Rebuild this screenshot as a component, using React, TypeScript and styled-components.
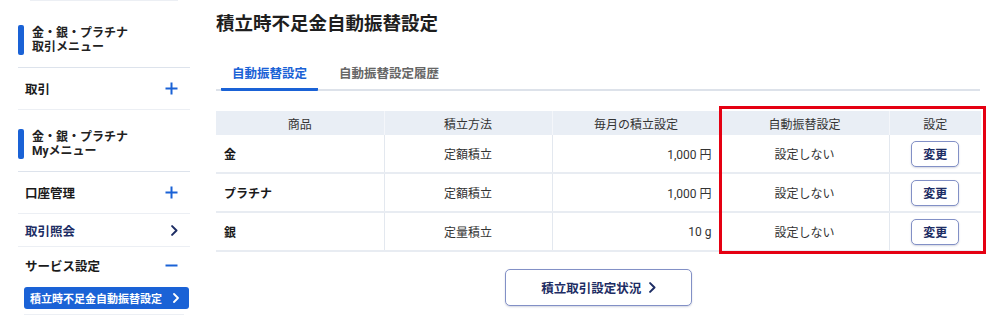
import * as React from 'react'
import styled, { createGlobalStyle } from 'styled-components'

const GlobalStyle = createGlobalStyle`
  body {
    margin: 0;
    background: #ffffff;
    font-family: 'Roboto', 'Noto Sans CJK JP', sans-serif;
    color: #222222;
  }
`

const Page = styled.div`
  display: flex;
  gap: 26px;
  padding-left: 18px;
  height: 316px;
  overflow: hidden;
`

const Sidebar = styled.nav`
  width: 172px;
  flex-shrink: 0;
  display: flex;
  flex-direction: column;
`

const Rule = styled.div<{ $inset?: number; $dark?: boolean }>`
  height: 1px;
  margin: 0 ${(p) => p.$inset ?? 0}px;
  background: ${(p) => (p.$dark ? '#dde3ec' : '#eceff4')};
`

const MenuHead = styled.div<{ $h: number; $top: number }>`
  height: ${(p) => p.$h}px;
  box-sizing: border-box;
  padding-top: ${(p) => p.$top}px;
`

const HeadTitle = styled.div`
  position: relative;
  padding-left: 14px;
  font-size: 12px;
  line-height: 14px;
  font-weight: 700;
  color: #222;

  &::before {
    content: '';
    position: absolute;
    left: 0;
    top: -1px;
    bottom: -1px;
    width: 6px;
    border-radius: 2px;
    background: #1a62d6;
  }
`

const Item = styled.div<{ $h: number; $link?: boolean }>`
  height: ${(p) => p.$h}px;
  display: flex;
  align-items: center;
  justify-content: space-between;
  padding: 0 12px 0 7px;
  font-size: 12.5px;
  font-weight: 700;
  color: ${(p) => (p.$link ? '#1d2d64' : '#1a1a1a')};
`

const SubLink = styled.div`
  margin: 4px 1px 0 6px;
  height: 22px;
  border-radius: 3px;
  background: #1a62d6;
  color: #fff;
  display: flex;
  align-items: center;
  justify-content: space-between;
  padding: 0 10px 0 6px;
  font-size: 11px;
  font-weight: 700;
`

const Main = styled.main`
  width: 765px;
  display: flex;
  flex-direction: column;
`

const Title = styled.h1`
  margin: 13px 0 0;
  font-size: 18.5px;
  line-height: 22px;
  font-weight: 700;
  color: #1e1e1e;
`

const Tabs = styled.div`
  display: flex;
  margin-top: 30px;
  border-bottom: 2px solid #dde2ea;
  margin-right: 1px;
`

const Tab = styled.div<{ $active?: boolean }>`
  margin: 0 5px -2px 5px;
  padding: 0 11px 6px;
  font-size: 12.5px;
  line-height: 17px;
  font-weight: 700;
  color: ${(p) => (p.$active ? '#1a62d6' : '#666')};
  border-bottom: 3px solid ${(p) => (p.$active ? '#1a62d6' : 'transparent')};
  border-radius: 1px;
`

const TableWrap = styled.div`
  position: relative;
  margin-top: 20px;
`

const Table = styled.table`
  width: 765px;
  border-collapse: collapse;
  table-layout: fixed;
  font-size: 12px;
  color: #333;
`

const Th = styled.th`
  height: 24px;
  padding: 0;
  background: #e9eef5;
  font-weight: 400;
  text-align: center;
  border-left: 1px solid #f4f6fa;
  &:first-child {
    border-left: none;
  }
`

const Td = styled.td<{ $align?: 'left' | 'center' | 'right'; $bold?: boolean }>`
  height: 37px;
  padding: 0 8px;
  text-align: ${(p) => p.$align ?? 'center'};
  font-weight: ${(p) => (p.$bold ? 700 : 400)};
  color: ${(p) => (p.$bold ? '#1a1a1a' : '#333')};
  border-bottom: 2px solid #e8ecf2;
  border-left: 1px solid #e3e8ef;
  &:first-child {
    border-left: none;
  }
`

const Highlight = styled.div`
  position: absolute;
  left: 503px;
  top: -5px;
  width: 261px;
  height: 142px;
  border: 3px solid #e50012;
  pointer-events: none;
`

const SmallButton = styled.button`
  width: 48px;
  height: 26px;
  border: 1.5px solid #8290c6;
  border-radius: 5px;
  background: #fff;
  color: #1d2d64;
  font-family: inherit;
  font-size: 12px;
  font-weight: 700;
  box-shadow: 0 1px 2px rgba(30, 45, 100, 0.2);
  vertical-align: middle;
`

const Footer = styled.div`
  display: flex;
  justify-content: center;
  margin-top: 17px;
`

const WideButton = styled.button`
  width: 187px;
  height: 37px;
  border: 1.5px solid #8290c6;
  border-radius: 5px;
  background: #fff;
  color: #1d2d64;
  font-family: inherit;
  font-size: 12.5px;
  font-weight: 700;
  display: flex;
  align-items: center;
  justify-content: center;
  gap: 8px;
  box-shadow: 0 1px 2px rgba(30, 45, 100, 0.2);
`

const Plus = () => (
  <svg width="13" height="13" viewBox="0 0 13 13">
    <path d="M6.5 0.5v12M0.5 6.5h12" stroke="#1a62d6" strokeWidth="2" />
  </svg>
)

const Minus = () => (
  <svg width="13" height="13" viewBox="0 0 13 13">
    <path d="M0.5 6.5h12" stroke="#1a62d6" strokeWidth="2" />
  </svg>
)

const Chevron = ({ color = '#1d2d64', size = 10 }: { color?: string; size?: number }) => (
  <svg width={size * 0.6} height={size} viewBox="0 0 6 10">
    <path d="M1 1l4 4-4 4" fill="none" stroke={color} strokeWidth="1.8" strokeLinecap="round" strokeLinejoin="round" />
  </svg>
)

const rows = [
  { name: '金', method: '定額積立', amount: '1,000 円' },
  { name: 'プラチナ', method: '定額積立', amount: '1,000 円' },
  { name: '銀', method: '定量積立', amount: '10 g' },
]

export default function App() {
  return (
    <>
      <GlobalStyle />
      <Page>
        <Sidebar>
          <Rule $inset={12} />
          <MenuHead $h={66} $top={25}>
            <HeadTitle>
              金・銀・プラチナ
              <br />
              取引メニュー
            </HeadTitle>
          </MenuHead>
          <Rule $dark />
          <Item $h={41}>
            取引
            <Plus />
          </Item>
          <Rule />
          <MenuHead $h={61} $top={20}>
            <HeadTitle>
              金・銀・プラチナ
              <br />
              Myメニュー
            </HeadTitle>
          </MenuHead>
          <Rule $dark />
          <Item $h={41}>
            口座管理
            <Plus />
          </Item>
          <Rule />
          <Item $h={32} $link>
            取引照会
            <Chevron size={11} />
          </Item>
          <Rule />
          <Item $h={36}>
            サービス設定
            <Minus />
          </Item>
          <SubLink>
            積立時不足金自動振替設定
            <Chevron color="#ffffff" size={10} />
          </SubLink>
          <Rule $inset={6} style={{ marginTop: 5 }} />
        </Sidebar>

        <Main>
          <Title>積立時不足金自動振替設定</Title>
          <Tabs>
            <Tab $active>自動振替設定</Tab>
            <Tab>自動振替設定履歴</Tab>
          </Tabs>

          <TableWrap>
            <Table>
              <colgroup>
                <col style={{ width: 168 }} />
                <col style={{ width: 168 }} />
                <col style={{ width: 168 }} />
                <col style={{ width: 169 }} />
                <col style={{ width: 92 }} />
              </colgroup>
              <thead>
                <tr>
                  <Th>商品</Th>
                  <Th>積立方法</Th>
                  <Th>毎月の積立設定</Th>
                  <Th>自動振替設定</Th>
                  <Th>設定</Th>
                </tr>
              </thead>
              <tbody>
                {rows.map((r) => (
                  <tr key={r.name}>
                    <Td $align="left" $bold>
                      {r.name}
                    </Td>
                    <Td>{r.method}</Td>
                    <Td $align="right">{r.amount}</Td>
                    <Td>設定しない</Td>
                    <Td>
                      <SmallButton>変更</SmallButton>
                    </Td>
                  </tr>
                ))}
              </tbody>
            </Table>
            <Highlight />
          </TableWrap>

          <Footer>
            <WideButton>
              積立取引設定状況
              <Chevron size={11} />
            </WideButton>
          </Footer>
        </Main>
      </Page>
    </>
  )
}
